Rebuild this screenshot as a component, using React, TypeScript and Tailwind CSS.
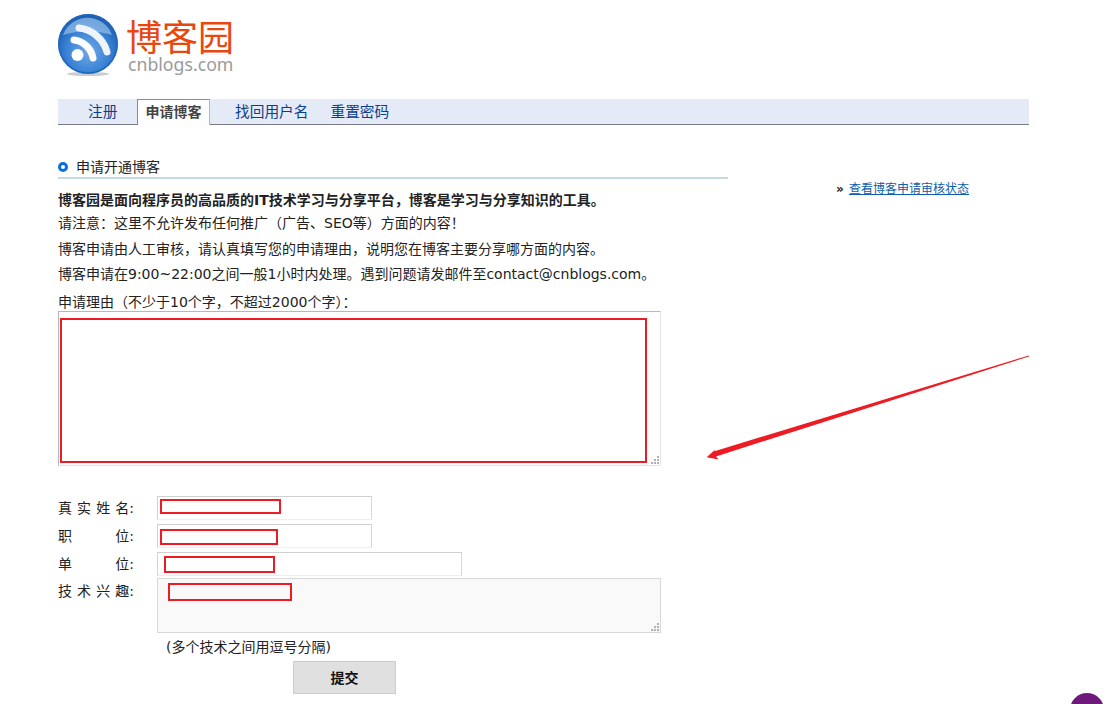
const cjk = "font-['DejaVu_Sans','Noto_Sans_CJK_SC',sans-serif]";

function Logo() {
  return (
    <div className="flex h-[64px] items-start">
      <svg width="66" height="66" viewBox="0 0 66 66" className="-ml-[1px] shrink-0">
        <defs>
          <radialGradient id="g" cx="0.5" cy="0.62" r="0.6">
            <stop offset="0" stopColor="#6fa9e6" />
            <stop offset="0.6" stopColor="#3a82d6" />
            <stop offset="1" stopColor="#1a5cab" />
          </radialGradient>
        </defs>
        <ellipse cx="31" cy="61" rx="21" ry="2" fill="#aaa" opacity="0.6" />
        <circle cx="31" cy="31" r="30" fill="url(#g)" />
        <circle cx="31" cy="31" r="29" fill="none" stroke="#1f68bd" strokeWidth="1.5" />
        <path d="M6 22 A26 26 0 0 1 55 22 A50 30 0 0 0 6 22Z" fill="#a9cdf2" opacity="0.6" />
        <circle cx="20.5" cy="42" r="6" fill="#fff" />
        <path d="M17 27 A22 22 0 0 1 36 45" fill="none" stroke="#fbfdff" strokeWidth="7" strokeLinecap="round" />
        <path d="M22 15 A33 33 0 0 1 50 39" fill="none" stroke="#eef4fb" strokeWidth="7" strokeLinecap="round" />
      </svg>
      <div className="ml-[3px] flex flex-col">
        <span className="mt-[4px] font-['Noto_Sans_CJK_SC',sans-serif] text-[36px] leading-[36px] text-[#e8470f]">博客园</span>
        <span className="ml-[2px] font-['Noto_Sans',sans-serif] text-[17.7px] leading-[22px] text-[#9a9a9a]">cnblogs.com</span>
      </div>
    </div>
  );
}

function Nav() {
  const link = "text-[14.7px] text-[#0a3f8f]";
  return (
    <nav className="mt-[22px] flex h-[26px] items-stretch border-b border-[#7a7a8c] bg-[#e4ebf7]">
      <a className={`${link} ml-[30px] w-[49px] leading-[26px]`}>注册</a>
      <a className="box-border flex h-[26px] w-[73px] items-center justify-center border border-b-0 border-[#8a8a96] border-r-[#b5b5bd] bg-white text-[14px] font-bold text-[#444]">申请博客</a>
      <a className={`${link} ml-[25px] leading-[26px]`}>找回用户名</a>
      <a className={`${link} ml-[22px] leading-[26px]`}>重置密码</a>
    </nav>
  );
}

function Mark({ className }: { className: string }) {
  return <div className={`pointer-events-none absolute border-2 border-[#ed1c24] ${className}`} />;
}

function Grip() {
  return (
    <svg className="pointer-events-none absolute bottom-[2px] right-[2px]" width="8" height="8" viewBox="0 0 8 8">
      <path d="M6 0h2v2H6zM3 3h2v2H3zM6 3h2v2H6zM0 6h2v2H0zM3 6h2v2H3zM6 6h2v2H6z" fill="#b0b0b0" />
    </svg>
  );
}

function Label({ chars }: { chars: string[] }) {
  return (
    <div className="flex w-[76px] shrink-0 justify-between text-[14px] text-[#222]">
      {chars.map((c) => (
        <span key={c}>{c}</span>
      ))}
    </div>
  );
}

const fieldBorder = "box-border border border-[#d0d0d0] border-r-[#d8d8d8] border-b-[#eeeeee] bg-white outline-none";

export default function App() {
  return (
    <div className={`relative h-[704px] w-[1113px] overflow-hidden bg-white ${cjk}`}>
      <div className="ml-[58px] w-[971px] pt-[13px]">
        <Logo />
        <Nav />
        <div className="flex">
          <main className="w-[670px] shrink-0">
            <h2 className="mt-[33px] flex h-[21px] items-center border-b-2 border-[#c5d8e4] pb-[2px] text-[14px] font-normal leading-[20px] text-[#222]">
              <span className="mr-[8px] box-border h-[10px] w-[10px] rounded-full border-[3px] border-[#0a6ee0] bg-white" />
              申请开通博客
            </h2>
            <div className="mt-[11px] text-[14px] text-[#222]">
              <p className="font-bold leading-[20px] whitespace-nowrap text-[#222]">博客园是面向程序员的高品质的IT技术学习与分享平台，博客是学习与分享知识的工具。</p>
              <p className="mt-[3px] leading-[20px]">请注意：这里不允许发布任何推广（广告、SEO等）方面的内容！</p>
              <p className="mt-[6px] leading-[20px]">博客申请由人工审核，请认真填写您的申请理由，说明您在博客主要分享哪方面的内容。</p>
              <p className="mt-[5px] leading-[20px] whitespace-nowrap">博客申请在9:00~22:00之间一般1小时内处理。遇到问题请发邮件至contact@cnblogs.com。</p>
              <p className="mt-[8px] leading-[20px]">申请理由（不少于10个字，不超过2000个字）：</p>
            </div>
            <div className="relative mt-[-1px] h-[155px] w-[603px]">
              <textarea className="box-border block h-[155px] w-[603px] resize-none border border-[#b8b8b8] border-r-[#e4e4e4] border-b-[#e4e4e4] bg-white outline-none" />
              <Grip />
              <Mark className="left-[2px] top-[7px] h-[145px] w-[587px]" />
            </div>
            <div className="mt-[30px] flex h-[24px] items-center gap-[23px]">
              <Label chars={["真", "实", "姓", "名:"]} />
              <div className="relative">
                <input className={`${fieldBorder} block h-[24px] w-[215px]`} />
                <Mark className="left-[3px] top-[3px] h-[15px] w-[121px]" />
              </div>
            </div>
            <div className="mt-[4px] flex h-[24px] items-center gap-[23px]">
              <Label chars={["职", "位:"]} />
              <div className="relative">
                <input className={`${fieldBorder} block h-[24px] w-[215px]`} />
                <Mark className="left-[3px] top-[5px] h-[16px] w-[118px]" />
              </div>
            </div>
            <div className="mt-[4px] flex h-[24px] items-center gap-[23px]">
              <Label chars={["单", "位:"]} />
              <div className="relative">
                <input className={`${fieldBorder} block h-[24px] w-[305px]`} />
                <Mark className="left-[7px] top-[4px] h-[17px] w-[111px]" />
              </div>
            </div>
            <div className="mt-[2px] flex items-start gap-[23px]">
              <div className="mt-[3px]">
                <Label chars={["技", "术", "兴", "趣:"]} />
              </div>
              <div className="relative">
                <textarea className="box-border block h-[55px] w-[504px] resize-none border border-[#d8d8d8] bg-[#f9f9f9] outline-none" />
                <Grip />
                <Mark className="left-[11px] top-[5px] h-[18px] w-[124px]" />
              </div>
            </div>
            <p className="ml-[108px] mt-[4px] text-[14px] leading-[20px] text-[#222]">(多个技术之间用逗号分隔)</p>
            <button className="ml-[235px] mt-[4px] box-border block h-[33px] w-[103px] border border-[#cccccc] bg-[#e0e0e0] pt-[1px] text-[14px] font-bold text-[#111]">提交</button>
          </main>
          <aside className="ml-[108px] mt-[56px] flex h-[16px] items-center text-[12px]">
            <span className="w-[13px] text-[12px] font-bold leading-none text-[#222]">»</span>
            <a className="text-[#0f5ea8] underline">查看博客申请审核状态</a>
          </aside>
        </div>
      </div>
      <svg className="pointer-events-none absolute left-[700px] top-[350px]" width="335" height="112" viewBox="700 350 335 112">
        <polygon points="1029,355.4 1029,356.4 716,456.4 718.5,459.5 706.7,457.3 715,449.8 714.5,451.2" fill="#ed1c24" />
      </svg>
      <div className="absolute left-[1070px] top-[693px] h-[48px] w-[34px] rounded-full bg-[#6d1a7a]" />
    </div>
  );
}
